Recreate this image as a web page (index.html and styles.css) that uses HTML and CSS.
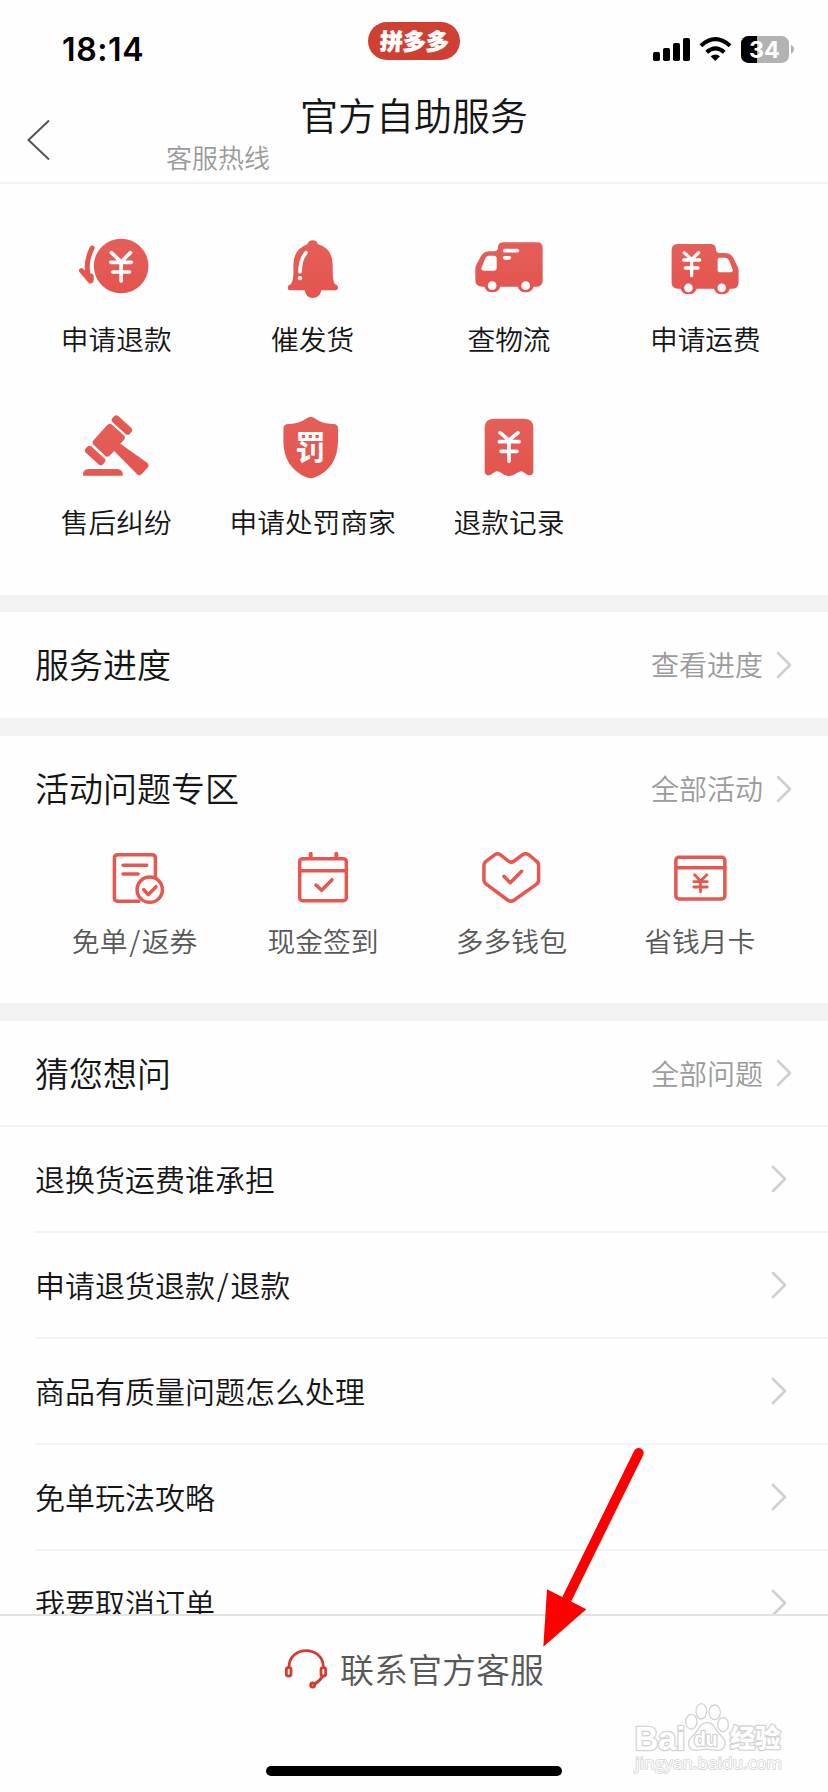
FILE: index.html
```html
<!DOCTYPE html>
<html lang="zh-CN">
<head>
<meta charset="utf-8">
<title>官方自助服务</title>
<link rel="stylesheet" href="styles.css">
</head>
<body>
<svg class="defs" width="0" height="0">
  <defs>
    <linearGradient id="red" x1="0" y1="0" x2="0" y2="1"><stop offset="0" stop-color="#e45f59"/><stop offset="1" stop-color="#e4544e"/></linearGradient>
    <symbol id="chevron" viewBox="0 0 16 28"><path d="M2 2L14 14L2 26" fill="none" stroke="#cfcfcf" stroke-width="2.6" stroke-linecap="round" stroke-linejoin="round"/></symbol>
  </defs>
</svg>
<div class="screen">
  <header class="header">
    <div class="status">
      <span class="time">18:14</span>
      <span class="pill"><b>拼多多</b></span>
      <svg class="signals" viewBox="714 102 432 96">
        <rect x="717" y="156" width="21" height="27" rx="5"/>
        <rect x="747" y="144" width="21" height="39" rx="5"/>
        <rect x="777" y="129" width="21" height="54" rx="5"/>
        <rect x="807" y="114" width="21" height="69" rx="5"/>
        <g fill="none" stroke="#000" stroke-width="12"><path d="M861 137Q904 98 948 137"/><path d="M878 157Q904 133 931 157"/></g>
        <path d="M890 169Q904 158 918 169L904 183Z"/>
        <clipPath id="bat"><rect x="981" y="108" width="144" height="81" rx="22"/></clipPath>
        <g clip-path="url(#bat)"><rect x="981" y="108" width="144" height="81" fill="#b2b2b2"/><rect x="981" y="108" width="48" height="81"/></g>
        <path d="M1131 134Q1140 139 1140 148Q1140 157 1131 162Z" fill="#b2b2b2"/>
        <text class="level" x="1051" y="174" text-anchor="middle">34</text>
      </svg>
    </div>
    <div class="nav">
      <svg class="back" viewBox="0 0 24 42"><path d="M22 1.500L1.500 21L22 40.500" fill="none" stroke="#555" stroke-width="2"/></svg>
      <h1 class="title">官方自助服务</h1>
      <span class="hotline">客服热线</span>
    </div>
  </header>

  <main class="content">
    <section class="services">
      <div class="service">
        <svg viewBox="108.600 30 240 216">
          <circle cx="244" cy="138" r="82" fill="url(#red)"/>
          <path d="M157 84Q132 134 149 179M125 152L152 183Q156 182 154 168" fill="none" stroke="#e4574f" stroke-width="15" stroke-linecap="round" stroke-linejoin="round"/>
          <path d="M215 98L244 126L272 98M213 127H275M219 156H269M244 126V183" class="w11"/>
        </svg>
        <span>申请退款</span>
      </div>
      <div class="service">
        <svg viewBox="697.800 30 240 216" fill="url(#red)">
          <path d="M801 73A16.500 16.500 0 0 1 833 73Q877 86 877 136V158Q877 184 884 193Q893 196 893 204Q892 211 883 211H843Q838 234 817 234Q797 234 793 211H752Q742 211 742 203Q742 196 751 193Q759 182 759 158V134Q759 88 801 73Z"/>
          <path d="M797 98Q779 119 779 155" class="w11"/>
          <circle cx="778.500" cy="174.500" r="6.500" fill="#fefefe"/>
        </svg>
        <span>催发货</span>
      </div>
      <div class="service">
        <svg viewBox="87 30 240 216">
          <path d="M188 67H292Q308 67 308 84V182Q308 199 290 200H281A25 23 0 0 1 233 200H181A25 23 0 0 1 133 200H126Q106 199 106 180V148Q106 140 110 133L123 108Q132 95 146 94H162Q174 94 174 82Q174 68 188 67Z" fill="url(#red)"/>
          <g fill="#fefefe"><path d="M145 107H162Q170 107 170 115V143Q170 152 162 152H131Q121 151 125 142L136 115Q139 108 145 107Z"/><circle cx="156.500" cy="197" r="13"/><circle cx="257" cy="197" r="13"/></g>
          <path d="M194 92H232M194 113.500H208" class="w11"/>
        </svg>
        <span>查物流</span>
      </div>
      <div class="service">
        <svg viewBox="676.200 30 240 216">
          <path d="M714 72H814Q829 73 829 87Q829 99 841 99H855Q873 99 881 113L893 138Q897 146 897 154V188Q896 205 880 206H871A25 23 0 0 1 823 206H771A25 23 0 0 1 723 206H714Q697 205 696 189V89Q697 73 714 72Z" fill="url(#red)"/>
          <g fill="#fefefe"><path d="M841 113H857Q865 114 868 121L879 148Q881 156 873 157H842Q834 157 834 149V121Q834 113 841 113Z"/><circle cx="746.500" cy="203.500" r="13"/><circle cx="846.500" cy="203.500" r="13"/></g>
          <path d="M734 98L756 119L777 98M732 120H780M737 144H775M756 119V167" class="w10"/>
        </svg>
        <span>申请运费</span>
      </div>
      <div class="service">
        <svg viewBox="108.600 39 240 216" fill="url(#red)">
          <rect x="-35" y="-12.500" width="70" height="25" rx="9" transform="translate(246.500 75) rotate(42)"/>
          <rect x="-35" y="-12.500" width="70" height="25" rx="9" transform="translate(166 166.500) rotate(42)"/>
          <path d="M203 74Q210 68 217 74L252 106Q258 112 253 119L242 131L322 188Q329 194 325 201L306 222Q299 229 292 223L223 153L211 166Q204 173 197 168L162 135Q155 128 161 121Z"/>
          <path d="M130 227Q128 208 146 207H234Q250 209 249 227Z"/>
        </svg>
        <span>售后纠纷</span>
      </div>
      <div class="service">
        <svg viewBox="697.800 39 240 216">
          <path d="M799 55Q811 46 823 55Q847 73 879 72Q893 72 893 86V125Q891 203 824 232Q811 238 798 232Q730 202 729 125V86Q730 72 744 72Q773 73 799 55Z" fill="url(#red)"/>
          <text class="badge" transform="translate(810 180) scale(.97 1.080)" text-anchor="middle">罚</text>
        </svg>
        <span>申请处罚商家</span>
      </div>
      <div class="service">
        <svg viewBox="147 39 240 216">
          <path d="M220 56H314Q339 57 340 82V217Q338 227 326 226C315 223 312 214 303 214C291 216 284 228 267 228C250 228 243 214 231 214C221 215 217 225 207 226Q195 226 194 215V82Q195 57 220 56Z" fill="url(#red)"/>
          <path d="M240 98L267 121L294 98M238 125H297M243 154H291M267 121V184" class="w11"/>
        </svg>
        <span>退款记录</span>
      </div>
    </section>

    <section class="block">
      <div class="head"><h2>服务进度</h2><a class="more"><span>查看进度</span><svg class="chev"><use href="#chevron"/></svg></a></div>
    </section>

    <section class="block activity">
      <div class="head"><h2>活动问题专区</h2><a class="more"><span>全部活动</span><svg class="chev"><use href="#chevron"/></svg></a></div>
      <div class="topics">
        <div class="topic">
          <svg viewBox="313.800 774 180 180" class="line">
            <path d="M415 934H353Q342 934 342 923V805Q342 794 353 794H455Q465 794 465 805V862M368 826H439M368 852H413"/>
            <circle cx="448" cy="899" r="38"/><path d="M430 899L443 914L467 890"/>
          </svg>
          <span>免单<i class="slash">/</i>返券</span>
        </div>
        <div class="topic">
          <svg viewBox="879 774 180 180" class="line">
            <rect x="899" y="806" width="140" height="126" rx="9"/><path d="M899 842H1039"/>
            <path d="M932 791V804M1009 791V804" stroke-width="12"/><path d="M948 885L965 901L996 869"/>
          </svg>
          <span>现金签到</span>
        </div>
        <div class="topic">
          <svg viewBox="184.200 324 180 180" class="line">
            <path d="M226 344Q234 339 242 344L266 363Q275 370 284 363L309 344Q318 338 327 344L350 363Q357 368 357 376V420Q357 429 349 434L284 480Q274 487 264 480L202 434Q193 428 193 420V376Q193 368 202 362Z"/>
            <path d="M253 409L272 428L306 394"/>
          </svg>
          <span>多多钱包</span>
        </div>
        <div class="topic">
          <svg viewBox="749.400 324 180 180" class="line">
            <rect x="767" y="352" width="147" height="125" rx="9"/><path d="M767 383H914"/>
            <path d="M823 404L841 423L860 404M821 425H861M821 441H861M841 423V455" class="yen"/>
          </svg>
          <span>省钱月卡</span>
        </div>
      </div>
    </section>

    <section class="block">
      <div class="head ruled"><h2>猜您想问</h2><a class="more"><span>全部问题</span><svg class="chev"><use href="#chevron"/></svg></a></div>
      <ul class="questions">
        <li><span>退换货运费谁承担</span><svg class="chev"><use href="#chevron"/></svg></li>
        <li><span>申请退货退款<i class="slash">/</i>退款</span><svg class="chev"><use href="#chevron"/></svg></li>
        <li><span>商品有质量问题怎么处理</span><svg class="chev"><use href="#chevron"/></svg></li>
        <li><span>免单玩法攻略</span><svg class="chev"><use href="#chevron"/></svg></li>
        <li><span>我要取消订单</span><svg class="chev"><use href="#chevron"/></svg></li>
      </ul>
    </section>
  </main>

  <footer class="footer">
    <div class="contact">
      <svg viewBox="849 624 132 132" fill="none" stroke="#d13e31" stroke-width="8.5">
        <path d="M864 682C864 615 967 615 967 682"/>
        <rect x="856" y="683" width="14" height="25" rx="6"/>
        <rect x="960" y="683" width="14" height="25" rx="6"/>
        <path d="M965 708Q957 723 941 732"/><circle cx="935" cy="735" r="6"/>
      </svg>
      <span>联系官方客服</span>
    </div>
    <div class="home-bar"></div>
  </footer>

  <svg class="overlay" viewBox="0 0 1224 1116">
    <path d="M656 99L440 538" stroke="#f00" stroke-width="30" stroke-linecap="round"/>
    <path d="M381 508L499 568L370 680Z" fill="#f00"/>
    <g class="mark">
      <text x="644" y="989" class="bai" textLength="152" lengthAdjust="spacingAndGlyphs">Bai</text>
      <path d="M861 908C884 908 887 934 904 948C927 969 912 993 890 991C870 987 852 987 832 991C806 993 795 967 818 948C835 934 838 908 861 908Z"/>
      <ellipse cx="814" cy="905" rx="17" ry="22"/><ellipse cx="844" cy="874" rx="16" ry="23"/><ellipse cx="884" cy="877" rx="17" ry="22"/><ellipse cx="909" cy="914" rx="16" ry="21"/>
      <text x="822" y="979" class="du">du</text>
      <text x="930" y="981" class="jy">经验</text>
      <text x="646" y="1046" class="url" textLength="440">jingyan.baidu.com</text>
    </g>
  </svg>
</div>
</body>
</html>
```
FILE: styles.css
```css
* { box-sizing: border-box; margin: 0; padding: 0; }

body {
  width: 828px;
  height: 1792px;
  overflow: hidden;
  background: #fefefe;
  color: #151515;
  font-family: "Noto Sans CJK SC", "Liberation Sans", sans-serif;
  font-weight: 350;
}

h1, h2 { font-weight: inherit; }
svg { display: block; flex: none; }
.defs { position: absolute; }

.screen {
  position: relative;
  display: flex;
  flex-direction: column;
  height: 1792px;
}

.header { flex: none; height: 184px; border-bottom: 2px solid #f3f3f3; }

.status {
  display: grid;
  grid-template-columns: 368px 92px 1fr;
  align-items: start;
  height: 84px;
  padding: 22px 32px 0 0;
}
.time {
  padding: 8px 0 0 62px;
  font: 600 32px/40px Inter, sans-serif;
  letter-spacing: .6px;
  color: #000;
}
.pill {
  display: flex;
  align-items: center;
  justify-content: center;
  height: 38px;
  border-radius: 19px;
  background: #cf3f32;
  color: #fff;
  font-size: 23px;
  line-height: 38px;
}
.pill b { font-weight: 900; -webkit-text-stroke: .5px #fff; transform: skewX(-3deg) translateY(-1px); }
.signals { width: 144px; height: 32px; margin-top: 12px; justify-self: end; }
.level { font: 700 70px Inter, sans-serif; fill: #fff; }

.nav { display: grid; grid-template-columns: 166px 1fr; grid-template-rows: 60px 24px; }
.back { grid-area: 1 / 1 / 3 / 2; width: 24px; height: 42px; margin: 35px 0 0 27px; }
.title { grid-area: 1 / 1 / 2 / 3; text-align: center; font-size: 38px; line-height: 60px; }
.hotline { grid-area: 2 / 2 / 3 / 3; font-size: 26px; line-height: 25px; color: #9b9b9b; }

.content { flex: 1; min-height: 0; overflow: hidden; }

.services {
  display: grid;
  grid-template-columns: repeat(4, 196.4px);
  grid-auto-rows: 129px;
  row-gap: 54px;
  height: 411px;
  padding: 46px 0 0 18px;
}
.service { display: flex; flex-direction: column; align-items: center; gap: 16px; }
.service svg { width: 80px; height: 72px; }
.service span { font-size: 27.7px; line-height: 40px; white-space: nowrap; }
.w11, .w10 { fill: none; stroke: #fefefe; stroke-width: 11; stroke-linecap: round; stroke-linejoin: round; }
.w10 { stroke-width: 10; }
.badge { font: 700 94px "Noto Sans CJK SC", sans-serif; fill: #fefefe; }

.block { border-top: 18px solid #f3f3f3; }
.services + .block { border-top-width: 17px; }
.activity { height: 285px; }
.head {
  display: flex;
  align-items: center;
  justify-content: space-between;
  height: 106px;
  padding: 0 36px 0 35px;
}
.ruled { border-bottom: 2px solid #f3f3f3; }
.head h2 { padding-bottom: 2px; font-size: 34px; line-height: 50px; }
.ruled h2 { padding-bottom: 0; }
.more { display: flex; align-items: center; gap: 13px; font-size: 28px; line-height: 40px; color: #9b9b9b; }
.more span { padding-bottom: 2px; }
.ruled .more span { padding-bottom: 0; }
.chev { width: 16px; height: 28px; }

.topics { display: grid; grid-template-columns: repeat(4, 188.4px); padding: 6px 0 0 40.4px; }
.topic { display: flex; flex-direction: column; align-items: center; gap: 12px; }
.topic svg { width: 60px; height: 60px; }
.topic span { font-size: 27.8px; line-height: 40px; color: #585858; }
.line { fill: none; stroke: #e6574f; stroke-width: 10.5; stroke-linecap: round; stroke-linejoin: round; }
.yen { stroke-width: 8.5; }
.slash { padding: 0 1.7px; font-style: normal; }

.questions { list-style: none; padding-left: 35px; }
.questions li {
  display: flex;
  align-items: center;
  justify-content: space-between;
  height: 106px;
  padding-right: 41px;
  border-bottom: 2px solid #f3f3f3;
  font-size: 30px;
}
.questions span { padding-bottom: 3px; }

.footer {
  flex: none;
  display: flex;
  flex-direction: column;
  align-items: center;
  height: 178px;
  border-top: 2px solid #e3e3e3;
}
.contact { display: flex; align-items: center; gap: 12px; height: 108px; font-size: 34px; color: #585858; }
.contact span { padding-bottom: 4px; }
.contact svg { width: 44px; height: 44px; }
.home-bar { width: 296px; height: 10px; margin-top: 42px; border-radius: 5px; background: #000; }

/* Pointer arrow and watermark lie over the page */
.overlay { position: absolute; left: 420px; top: 1420px; width: 408px; height: 372px; pointer-events: none; }
.mark { fill: #fefefe; stroke: #d4d4d4; stroke-width: 4; stroke-linejoin: round; }
.mark text { paint-order: stroke; stroke-width: 8; }
.mark .bai { font: 700 100px "Liberation Sans", sans-serif; }
.mark .du { font: 700 58px "Liberation Sans", sans-serif; }
.mark .jy { font: 900 76px "Noto Sans CJK SC", sans-serif; }
.mark .url { font: 400 50px "Open Sans", sans-serif; stroke-width: 5; }
```
